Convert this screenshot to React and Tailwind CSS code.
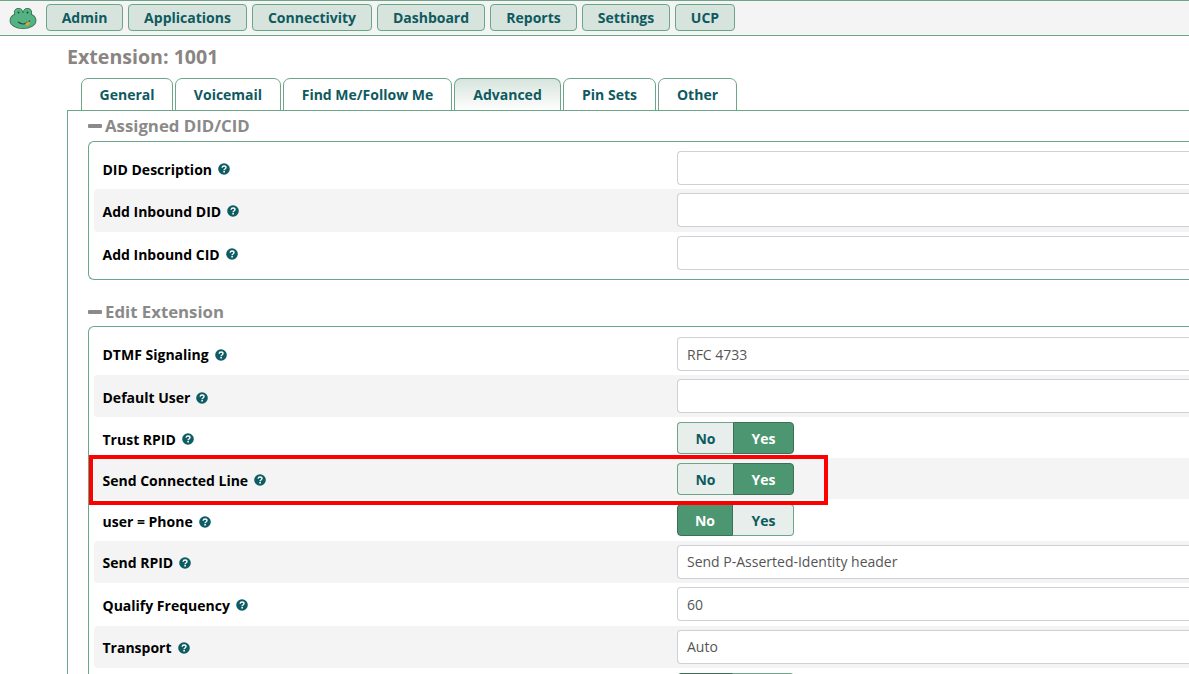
const green = "border-[#6ca587]";

function Help() {
  return (
    <svg width="12" height="12" viewBox="0 0 12 12" className="shrink-0">
      <circle cx="6" cy="6" r="5.8" fill="#0d5c63" />
      <path d="M4.1 4.7C4.2 3.6 5 3 6.1 3c1.1 0 1.9.6 1.9 1.6 0 1.4-1.9 1.4-1.9 2.6" fill="none" stroke="#fff" strokeWidth="1.4" />
      <rect x="5.3" y="8" width="1.6" height="1.5" fill="#fff" />
    </svg>
  );
}

function Frog() {
  return (
    <svg width="28" height="24" viewBox="0 0 28 24">
      <g stroke="#2f6e4e" strokeWidth="1.6" fill="#2f6e4e">
        <circle cx="9.5" cy="6.5" r="3.8" />
        <circle cx="18.5" cy="6.5" r="3.8" />
        <ellipse cx="14" cy="14.5" rx="12.6" ry="7.8" />
      </g>
      <g fill="#54b283">
        <circle cx="9.5" cy="6.5" r="3.8" />
        <circle cx="18.5" cy="6.5" r="3.8" />
        <ellipse cx="14" cy="14.5" rx="12.6" ry="7.8" />
        <rect x="9" y="7" width="10" height="5" />
      </g>
      <circle cx="9.5" cy="6.5" r="1" fill="#1d4d38" />
      <circle cx="18.5" cy="6.5" r="1" fill="#1d4d38" />
      <path d="M9 16c3.5 3 9 2.5 12-1.5" fill="none" stroke="#1f4d38" strokeWidth="1.1" />
      <path d="M16 18l3.5-2.5 1.5 2-3 2.2z" fill="#f0a030" />
    </svg>
  );
}

function NavButton({ label, w }) {
  return (
    <button className={`h-[27px] ${w} rounded-[4px] border ${green} bg-[#d7e4dd] text-[14px] font-bold text-[#0e5a5f]`}>
      {label}
    </button>
  );
}

function Tab({ label, w, active }) {
  return (
    <div
      className={`relative -mb-px flex h-[33px] ${w} items-center justify-center rounded-t-[7px] border ${green} text-[14px] font-bold text-[#0e5a5f] ${
        active ? "border-b-0 bg-gradient-to-b from-[#d7e4dd] to-white pb-px" : "bg-white"
      }`}
    >
      {label}
    </div>
  );
}

function Label({ text, lp }) {
  return (
    <div className={`flex w-[574px] shrink-0 items-center gap-[6px] pl-[8.5px] ${lp} text-[14px] font-bold text-black`}>
      <span>{text}</span>
      {text ? <Help /> : null}
    </div>
  );
}

function Input({ value }) {
  return (
    <div className="mb-px flex h-[34px] flex-1 items-center rounded-l-[4px] border border-r-0 border-[#cfcfd6] bg-white pl-[9px] text-[14px] text-[#555]">
      {value}
    </div>
  );
}

function Toggle({ value, blank, nudge }) {
  const on = "bg-[#4c9672] text-white border-[#3d6f58]";
  const off = "bg-[#e7eeeb] text-[#0e5a5f] border-[#6ca587]";
  return (
    <div className={`flex h-[32px] w-[117px] text-[14px] font-bold ${nudge ? "leading-[22px]" : ""}`}>
      <div className={`flex w-[56px] items-center justify-center rounded-l-[4px] border ${nudge ? "pt-[2px]" : ""} ${value === "No" ? on : off} ${value === "No" ? "" : "border-r-0"}`}>{blank ? "" : "No"}</div>
      <div className={`flex w-[61px] items-center justify-center rounded-r-[4px] border ${nudge ? "pt-[2px]" : ""} ${value === "Yes" ? on : off} ${value === "Yes" ? "" : "border-l-0 pl-px"}`}>{blank ? "" : "Yes"}</div>
    </div>
  );
}

function Row({ label, gray, h, lp = "pt-[1px]", children }) {
  return (
    <div className={`flex ${h} items-center rounded-l-[4px] ${gray ? "bg-[#f4f4f4]" : ""}`}>
      <Label text={label} lp={lp} />
      <div className="flex flex-1 items-center pl-[9px]">{children}</div>
    </div>
  );
}

function SectionTitle({ text }) {
  return (
    <div className="flex h-[30px] items-center gap-[3px] text-[16.8px] font-bold text-[#8a8a8a]">
      <span className="h-[4px] w-[14px] rounded-[1px] bg-[#8a8a8a]" />
      <span>{text}</span>
    </div>
  );
}

export default function App() {
  return (
    <div className="h-[674px] w-[1189px] overflow-hidden bg-white font-['Open_Sans',sans-serif]">
      <header className={`flex h-[36px] items-center gap-[5px] border-y ${green} bg-[#f4f4f4] pb-[1px]`}>
        <div className="ml-[9px] mr-[4px] flex w-[28px] items-center">
          <Frog />
        </div>
        <NavButton label="Admin" w="w-[77px]" />
        <NavButton label="Applications" w="w-[119px]" />
        <NavButton label="Connectivity" w="w-[120px]" />
        <NavButton label="Dashboard" w="w-[108px]" />
        <NavButton label="Reports" w="w-[87px]" />
        <NavButton label="Settings" w="w-[88px]" />
        <NavButton label="UCP" w="w-[60px]" />
      </header>

      <main className="pl-[67px]">
        <h1 className="flex h-[42px] items-center text-[19.6px] font-bold text-[#8a8582]">Extension: 1001</h1>

        <div className="flex gap-[2px] pl-[14px]">
          <Tab label="General" w="w-[92px]" />
          <Tab label="Voicemail" w="w-[106px]" />
          <Tab label="Find Me/Follow Me" w="w-[169px]" />
          <Tab label="Advanced" w="w-[107px]" active />
          <Tab label="Pin Sets" w="w-[93px]" />
          <Tab label="Other" w="w-[79px]" />
        </div>

        <div className={`relative z-10 h-[600px] border-l border-t ${green} pl-[20px]`}>
          <SectionTitle text="Assigned DID/CID" />
          <section className={`rounded-l-[6px] border border-r-0 ${green} pb-[4px] pl-[5px] pt-[6px]`}>
            <Row label="DID Description" h="h-[41px]"><Input /></Row>
            <Row label="Add Inbound DID" h="h-[43px]" gray><Input /></Row>
            <Row label="Add Inbound CID" h="h-[43px]"><Input /></Row>
          </section>

          <div className="mb-[-1px] mt-[17px]">
            <SectionTitle text="Edit Extension" />
          </div>
          <section className={`relative rounded-l-[6px] border border-r-0 ${green} pl-[5px] pt-[7px]`}>
            <Row label="DTMF Signaling" h="h-[41px]" lp="pt-0"><Input value="RFC 4733" /></Row>
            <Row label="Default User" h="h-[42px]" gray lp="pt-[3px]"><Input /></Row>
            <Row label="Trust RPID" h="h-[41px]" lp="pt-[3px]"><Toggle value="Yes" nudge /></Row>
            <Row label="Send Connected Line" h="h-[41px]" gray lp="pt-[3px]"><Toggle value="Yes" nudge /></Row>
            <Row label="user = Phone" h="h-[42px]" lp="pt-[3px]"><Toggle value="No" /></Row>
            <Row label="Send RPID" h="h-[42px]" gray><Input value="Send P-Asserted-Identity header" /></Row>
            <Row label="Qualify Frequency" h="h-[43px]"><Input value="60" /></Row>
            <Row label="Transport" h="h-[42px]" gray><Input value="Auto" /></Row>
            <Row label="" h="h-[42px]"><Toggle value="No" blank /></Row>
            <div className="absolute left-0 top-[128px] h-[50px] w-[739px] border-4 border-[#ff0000]" />
          </section>
        </div>
      </main>
    </div>
  );
}
